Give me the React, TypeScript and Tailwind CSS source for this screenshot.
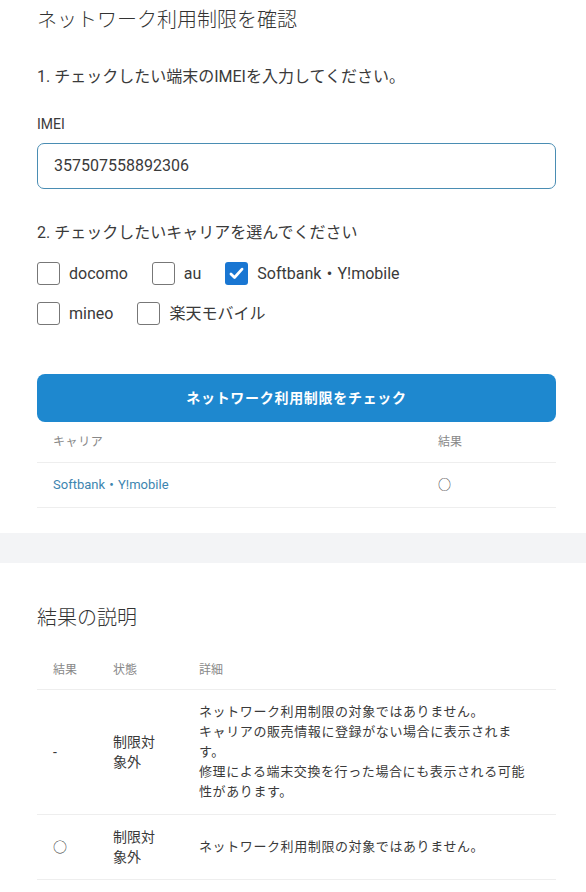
import React from "react";

type Carrier = {
    id: string;
    label: string;
    checked: boolean;
};

const carriersRow1: Carrier[] = [
    { id: "docomo", label: "docomo", checked: false },
    { id: "au", label: "au", checked: false },
    { id: "softbank", label: "Softbank・Y!mobile", checked: true },
];

const carriersRow2: Carrier[] = [
    { id: "mineo", label: "mineo", checked: false },
    { id: "rakuten", label: "楽天モバイル", checked: false },
];

const explanations = [
    {
        result: "-",
        state: "制限対象外",
        detail: [
            "ネットワーク利用制限の対象ではありません。",
            "キャリアの販売情報に登録がない場合に表示されます。",
            "修理による端末交換を行った場合にも表示される可能性があります。",
        ],
    },
    {
        result: "○",
        state: "制限対象外",
        detail: ["ネットワーク利用制限の対象ではありません。"],
    },
];

function CheckItem({ carrier }: { carrier: Carrier }) {
    return (
        <label className="flex items-center gap-[9px]">
            {carrier.checked ? (
                <span className="flex h-[23px] w-[23px] items-center justify-center rounded-[3px] bg-[#1976d2]">
                    <svg viewBox="0 0 24 24" className="h-[19px] w-[19px]" fill="none" stroke="white" strokeWidth="3.5" strokeLinecap="round" strokeLinejoin="round">
                        <path d="M5 12.5l4.5 4.5L19 6.5" />
                    </svg>
                </span>
            ) : (
                <span className="h-[23px] w-[23px] rounded-[3px] border border-[#777] bg-white" />
            )}
            <span className="text-[16px] leading-[23px]">{carrier.label}</span>
        </label>
    );
}

export default function App() {
    return (
        <div className="min-h-[892px] w-[586px] bg-white text-[#3a3a3a] [font-family:Roboto,'Noto_Sans_CJK_JP',sans-serif]">
            <section className="pl-[37px] pr-[30px] pt-[6px]">
                <h1 className="text-[20px] leading-[28px] font-light text-[#333]">ネットワーク利用制限を確認</h1>

                <p className="mt-[31px] text-[16px] leading-[24px]">1. チェックしたい端末のIMEIを入力してください。</p>

                <p className="mt-[25px] text-[14px] leading-[20px]">IMEI</p>
                <div className="mt-[9px] flex h-[46px] items-center rounded-[7px] border border-[#4a8db3] px-4">
                    <span className="text-[16px]">357507558892306</span>
                </div>

                <p className="mt-[32px] text-[16px] leading-[24px]">2. チェックしたいキャリアを選んでください</p>

                <div className="mt-[17px] flex flex-col gap-[17px]">
                    <div className="flex gap-[24px]">
                        {carriersRow1.map(c => (
                            <CheckItem key={c.id} carrier={c} />
                        ))}
                    </div>
                    <div className="flex gap-[24px]">
                        {carriersRow2.map(c => (
                            <CheckItem key={c.id} carrier={c} />
                        ))}
                    </div>
                </div>

                <button className="mt-[49px] flex h-[48px] w-full items-center justify-center rounded-[8px] bg-[#1e88cf] text-[14px] font-bold tracking-[0.05em] text-white">
                    ネットワーク利用制限をチェック
                </button>

                <div className="grid grid-cols-[385px_1fr] border-b border-[#eee] text-[12px] leading-[18px] text-[#888]">
                    <div className="py-[11px] pl-4 tracking-[0.05em]">キャリア</div>
                    <div className="py-[11px] pl-4">結果</div>
                </div>
                <div className="grid grid-cols-[385px_1fr] border-b border-[#eee] text-[13px] leading-[20px]">
                    <div className="py-[12px] pl-4 text-[#3d85b0]">Softbank・Y!mobile</div>
                    <div className="py-[12px] pl-4">○</div>
                </div>
            </section>

            <div className="mt-[25px] h-[30px] bg-[#f3f4f6]" />

            <section className="pl-[37px] pr-[30px] pt-[41px] pb-6">
                <h2 className="text-[20px] leading-[28px] font-light text-[#333]">結果の説明</h2>

                <div className="mt-[19px] grid grid-cols-[60px_86px_1fr] border-b border-[#eee] text-[12px] leading-[18px] text-[#888]">
                    <div className="py-[10px] pl-4">結果</div>
                    <div className="py-[10px] pl-4">状態</div>
                    <div className="py-[10px] pl-4">詳細</div>
                </div>

                {explanations.map((row, i) => (
                    <div key={i} className="grid grid-cols-[60px_86px_1fr] items-center border-b border-[#eee] text-[14px] leading-[20px]">
                        <div className="pl-4">{row.result}</div>
                        <div className="py-[12px] pl-4 pr-[26px]">{row.state}</div>
                        <div className="py-[12px] pl-4 pr-6 text-[13px] tracking-[0.6px]">
                            {row.detail.map((line, j) => (
                                <p key={j}>{line}</p>
                            ))}
                        </div>
                    </div>
                ))}
            </section>
        </div>
    );
}
